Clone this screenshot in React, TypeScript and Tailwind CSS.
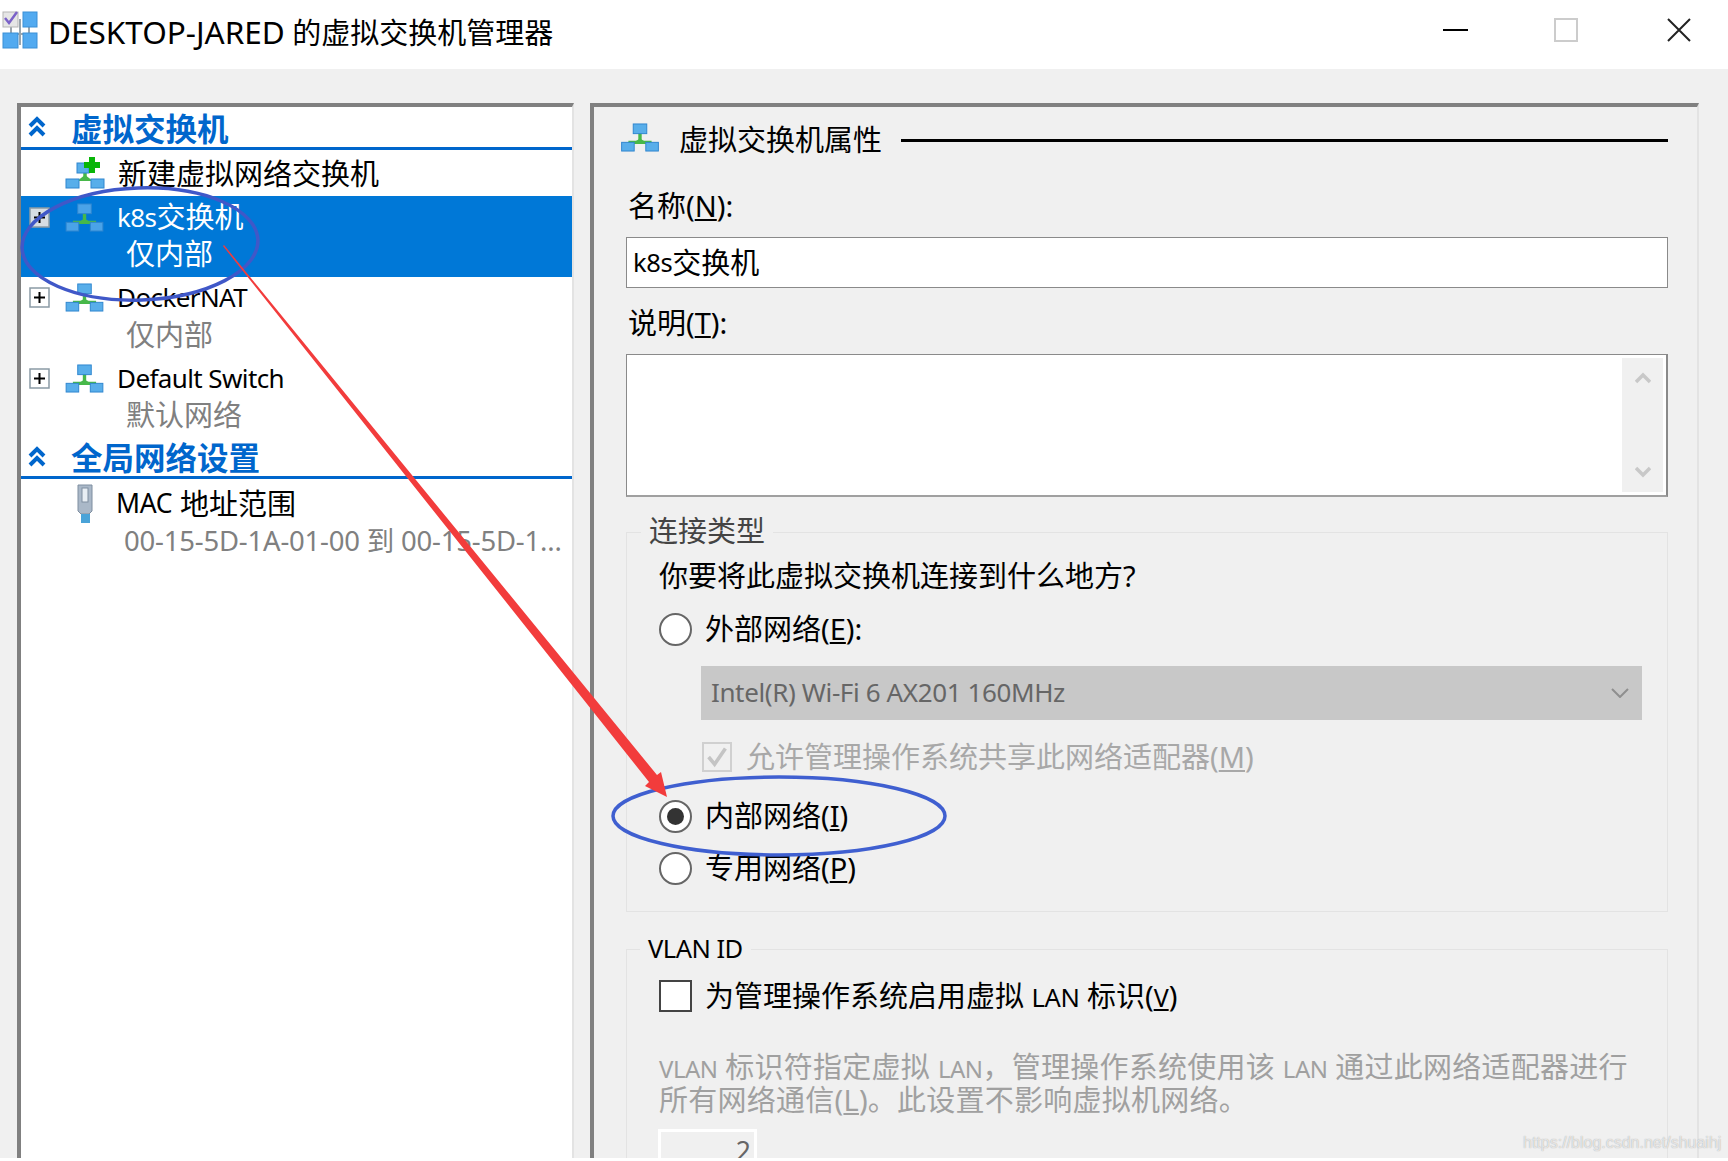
const FONT = "font-['Noto_Sans','Noto_Sans_CJK_SC',sans-serif]"

function SwitchIcon({ className = "", faded = false }: { className?: string; faded?: boolean }) {
  const box = faded ? "#4aa3e8" : "#58aeea"
  return (
    <svg viewBox="0 0 40 30" className={className}>
      <path d="M20 10v8M8 20h24" stroke="#47b84a" strokeWidth="3.5" fill="none" />
      <path d="M12 21l8-5 8 5z" fill="#47b84a" />
      <rect x="13" y="1" width="14" height="10" fill={box} stroke="#2f86cf" />
      <rect x="1" y="20" width="13" height="9" fill={box} stroke="#2f86cf" />
      <rect x="26" y="20" width="13" height="9" fill={box} stroke="#2f86cf" />
    </svg>
  )
}

function NewSwitchIcon({ className = "" }: { className?: string }) {
  return (
    <svg viewBox="0 0 40 32" className={className}>
      <path d="M20 11v10" stroke="#47b84a" strokeWidth="3.5" fill="none" />
      <path d="M12 24l8-6 8 6z" fill="#47b84a" />
      <rect x="12" y="6" width="12" height="10" fill="#58aeea" stroke="#2f86cf" />
      <rect x="1" y="22" width="13" height="9" fill="#58aeea" stroke="#2f86cf" />
      <rect x="26" y="22" width="13" height="9" fill="#58aeea" stroke="#2f86cf" />
      <path d="M24 0h6v5h5v6h-5v5h-6v-5h-5V5h5z" fill="#08b508" />
    </svg>
  )
}

function AppIcon() {
  return (
    <svg viewBox="0 0 36 38" className="w-[36px] h-[38px] shrink-0">
      <path d="M9 15v8h18v-8M18 8v26" stroke="#9aa5ad" strokeWidth="2" fill="none" />
      <rect x="1" y="1" width="15" height="15" fill="#e6e6e6" stroke="#b5b5b5" />
      <path d="M3 7l4 5 8-11" stroke="#7b62c8" strokeWidth="2.5" fill="none" />
      <rect x="21" y="1" width="14" height="15" fill="#52aaf0" stroke="#3b8fd6" />
      <rect x="1" y="22" width="15" height="15" fill="#52aaf0" stroke="#3b8fd6" />
      <rect x="21" y="22" width="14" height="15" fill="#52aaf0" stroke="#3b8fd6" />
    </svg>
  )
}

function CollapseIcon() {
  return (
    <svg viewBox="0 0 18 22" className="w-[18px] h-[22px]">
      <path d="M2 10l7-7 7 7M2 19l7-7 7 7" stroke="#0066cc" strokeWidth="4" fill="none" />
    </svg>
  )
}

function ExpandBox({ selected }: { selected?: boolean }) {
  return (
    <svg viewBox="0 0 21 21" className="w-[21px] h-[21px]">
      <rect x="1" y="1" width="19" height="19" fill={selected ? "#d6dde3" : "#fff"} stroke="#8a9aa5" strokeWidth="1.5" />
      <path d="M5 10.5h11M10.5 5v11" stroke="#000" strokeWidth="2" />
    </svg>
  )
}

function SectionHead({ title, className = "" }: { title: string; className?: string }) {
  return (
    <div className={`flex items-center border-b-[3px] border-[#0066cc] pt-[3px] ${className}`}>
      <div className="w-[50px] pl-[7px] flex items-center -mt-[3px]"><CollapseIcon /></div>
      <span className="text-[31.5px] leading-[38px] font-bold text-[#0066cc]">{title}</span>
    </div>
  )
}

function SwitchRow({ name, cjk, sub, selected }: { name: string; cjk?: string; sub: string; selected?: boolean }) {
  return (
    <div className={`h-[80.5px] flex flex-col pt-[2px] ${selected ? "bg-[#0078d7] text-white" : "text-black"}`}>
      <div className="h-[40px] flex items-center">
        <div className="w-[44px] pl-[8px] flex -mt-[2px]"><ExpandBox selected={selected} /></div>
        <SwitchIcon className="w-[39px] h-[29px] mr-[13px] -mt-[2px]" faded={selected} />
        <span className="text-[26px] tracking-[-0.6px] -mt-[2px]">{name}</span>
        {cjk && <span className="text-[29px] -mt-[2px]">{cjk}</span>}
      </div>
      <div className={`pl-[105px] -mt-[2px] h-[36px] flex items-center text-[29px] ${selected ? "text-white" : "text-[#808080]"}`}>{sub}</div>
    </div>
  )
}

function LeftPanel() {
  return (
    <div className="w-[557px] h-full bg-white border-t-[4px] border-l-[4px] border-t-[#808080] border-l-[#808080] border-r-[2px] border-r-[#e3e3e3] overflow-hidden">
      <SectionHead title="虚拟交换机" className="h-[43px]" />
      <div className="h-[46px] flex items-center pt-[2px]">
        <NewSwitchIcon className="w-[40px] h-[32px] ml-[44px] mr-[13px] -mt-[2px]" />
        <span className="text-[29px]">新建虚拟网络交换机</span>
      </div>
      <SwitchRow name="k8s" cjk="交换机" sub="仅内部" selected />
      <SwitchRow name="DockerNAT" sub="仅内部" />
      <SwitchRow name="Default Switch" sub="默认网络" />
      <SectionHead title="全局网络设置" className="h-[41px]" />
      <div className="h-[48px] flex items-center pt-[2px]">
        <svg viewBox="0 0 20 40" className="w-[20px] h-[40px] ml-[54px] mr-[21px]">
          <path d="M3 1h14v26l-3 3H6l-3-3z" fill="#aab8c8" stroke="#7f8ea0" />
          <rect x="7" y="4" width="6" height="14" fill="#e8eef4" stroke="#7f8ea0" />
          <rect x="6" y="30" width="9" height="9" fill="#4aa3d8" />
        </svg>
        <span className="text-[26.5px] mr-[8px] tracking-[-0.4px]">MAC</span>
        <span className="text-[29px]">地址范围</span>
      </div>
      <div className="pl-[103px] -mt-[4px] h-[36px] flex items-center text-[#808080] whitespace-nowrap">
        <span className="text-[27.5px] tracking-[-0.2px]">00-15-5D-1A-01-00 到 00-15-5D-1...</span>
      </div>
    </div>
  )
}

function Radio({ checked }: { checked?: boolean }) {
  return (
    <span className="w-[33px] h-[33px] rounded-full border-[2px] border-[#666] bg-white flex items-center justify-center shrink-0">
      {checked && <span className="w-[17px] h-[17px] rounded-full bg-[#333]" />}
    </span>
  )
}

function RadioRow({ label, mn, tail, checked, className = "" }: { label: string; mn: string; tail?: string; checked?: boolean; className?: string }) {
  return (
    <div className={`h-[40px] flex items-center gap-[13px] ${className}`}>
      <Radio checked={checked} />
      <span className="text-[29px]">{label}(<u>{mn}</u>){tail}</span>
    </div>
  )
}

function RightPanel() {
  return (
    <div className="w-[1109px] h-full border-t-[4px] border-l-[4px] border-t-[#808080] border-l-[#808080] border-r-[2px] border-r-[#e3e3e3] overflow-hidden">
      <div className="w-[1042px] ml-[32px] text-black">
        <div className="h-[66px] flex items-center">
          <SwitchIcon className="w-[40px] h-[29px] mr-[19px] -ml-[6px] -mt-[5px]" />
          <span className="text-[29px] mr-[19px]">虚拟交换机属性</span>
          <div className="flex-1 h-[3px] bg-black" />
        </div>

        <div className="h-[40px] mt-[13px] flex items-center pl-[2px] text-[29px]">名称(<u>N</u>):</div>
        <div className="h-[51px] mt-[11px] bg-white border border-[#8a8a8a] flex items-center pl-[6px] text-[29px]">
          <span className="text-[25.5px] tracking-[-0.4px]">k8s</span>交换机
        </div>

        <div className="h-[40px] mt-[15px] flex items-center pl-[2px] text-[29px]">说明(<u>T</u>):</div>
        <div className="h-[143px] mt-[11px] bg-white border border-[#8a8a8a] border-r-[2px] border-b-[2px] border-b-[#a0a0a0] relative">
          <div className="absolute right-[3px] top-[3px] bottom-[3px] w-[41px] bg-[#f0f0f0] flex flex-col justify-between items-center py-[14px] text-[#c8c8c8]">
            <svg viewBox="0 0 16 12" className="w-[16px] h-[12px]"><path d="M1 10l7-7 7 7" stroke="currentColor" strokeWidth="3.5" fill="none" /></svg>
            <svg viewBox="0 0 16 12" className="w-[16px] h-[12px]"><path d="M1 2l7 7 7-7" stroke="currentColor" strokeWidth="3.5" fill="none" /></svg>
          </div>
        </div>

        {/* 连接类型 */}
        <div className="relative mt-[35px] h-[380px] border border-[#e3e3e3] pl-[32px] pr-[25px] pt-[23px]">
          <span className="absolute left-[14px] -top-[22px] bg-[#f0f0f0] px-[8px] h-[40px] flex items-center text-[29px] text-[#444]">连接类型</span>
          <div className="h-[40px] flex items-center text-[29px]">你要将此虚拟交换机连接到什么地方?</div>
          <RadioRow label="外部网络" mn="E" tail=":" className="mt-[13px]" />
          <div className="h-[54px] mt-[17px] ml-[42px] bg-[#c8c8c8] flex items-center justify-between pl-[10px] pr-[13px] text-[#666]">
            <span className="text-[26px] tracking-[-0.38px] -mt-[2px]">Intel(R) Wi-Fi 6 AX201 160MHz</span>
            <svg viewBox="0 0 18 10" className="w-[18px] h-[10px]"><path d="M1 1l8 8 8-8" stroke="#8f8f8f" strokeWidth="2" fill="none" /></svg>
          </div>
          <div className="h-[40px] mt-[17px] ml-[43px] flex items-center gap-[14px] text-[#a8a8a8]">
            <span className="w-[30px] h-[30px] border-[2px] border-[#d0d0d0] flex items-center justify-center shrink-0">
              <svg viewBox="0 0 20 20" className="w-[24px] h-[24px]"><path d="M3 10l5 6 9-13" stroke="#c4c4c4" strokeWidth="3" fill="none" /></svg>
            </span>
            <span className="text-[29px]">允许管理操作系统共享此网络适配器(<u>M</u>)</span>
          </div>
          <RadioRow label="内部网络" mn="I" checked className="mt-[19px]" />
          <RadioRow label="专用网络" mn="P" className="mt-[12px]" />
        </div>

        {/* VLAN ID */}
        <div className="relative mt-[37px] h-[260px] border border-[#e3e3e3] pl-[32px] pt-[26px]">
          <span className="absolute left-[13px] -top-[22px] bg-[#f0f0f0] px-[8px] h-[40px] flex items-center text-[25.5px] tracking-[-0.5px]">VLAN ID</span>
          <div className="h-[40px] flex items-center gap-[13px]">
            <span className="w-[33px] h-[32px] bg-white border-[2px] border-[#444] shrink-0" />
            <span className="text-[29px] whitespace-nowrap">为管理操作系统启用虚拟 <span className="text-[25.5px] tracking-[-0.4px]">LAN</span> 标识(<u className="text-[25px]">V</u>)</span>
          </div>
          <div className="mt-[36px] text-[29px] leading-[30.5px] tracking-[0.25px] text-[#a0a0a0] whitespace-nowrap">
            <div><span className="text-[24px] tracking-[-0.5px]">VLAN</span> 标识符指定虚拟 <span className="text-[24px] tracking-[-0.5px]">LAN</span>，管理操作系统使用该 <span className="text-[24px] tracking-[-0.5px]">LAN</span> 通过此网络适配器进行</div>
            <div>所有网络通信(<u>L</u>)。此设置不影响虚拟机网络。</div>
          </div>
          <div className="w-[99px] h-[60px] mt-[14px] -ml-[1px] border-[3px] border-white bg-[#f0f0f0] flex items-start justify-end pr-[3px] pt-[3px] text-[26.5px] leading-[32px] text-[#666]">2</div>
        </div>
      </div>
    </div>
  )
}

export default function App() {
  return (
    <div className={`relative w-[1728px] h-[1161px] overflow-hidden bg-white ${FONT}`}>
      {/* Title bar */}
      <div className="h-[69px] flex items-center pl-[2px] pb-[9px]">
        <AppIcon />
        <span className="ml-[10px] mt-[3px] text-[29px] text-black whitespace-nowrap">
          <span className="text-[31.5px]">DESKTOP-JARED</span> 的虚拟交换机管理器
        </span>
        <div className="ml-auto flex items-center">
          <div className="w-[25px] h-[2px] bg-black mr-[86px]" />
          <div className="w-[24px] h-[24px] border-[2px] border-[#cccccc] mr-[89px]" />
          <svg viewBox="0 0 24 24" className="w-[24px] h-[24px] mr-[37px]"><path d="M1 1l22 22M23 1L1 23" stroke="#222" strokeWidth="2" /></svg>
        </div>
      </div>

      <div className="h-[1089px] bg-[#f0f0f0] pt-[34px] pl-[17px] flex gap-[16px]">
        <LeftPanel />
        <RightPanel />
      </div>

      {/* Annotations drawn over the screenshot */}
      <svg className="absolute inset-0 pointer-events-none" width="1728" height="1161" viewBox="0 0 1728 1161">
        <ellipse cx="140" cy="244" rx="118" ry="56" fill="none" stroke="#4058c8" strokeWidth="3.5" transform="rotate(-2 140 244)" />
        <ellipse cx="779" cy="816" rx="166" ry="39" fill="none" stroke="#3f5fd0" strokeWidth="3.5" />
        <polygon points="224,245 657,775 661,772 667,797 645,786 649,782 223,246" fill="#f23c3c" />
      </svg>

      <span className="absolute left-[1523px] top-[1132px] font-['Liberation_Sans',sans-serif] text-[16px] leading-[22px] text-white/70 [text-shadow:0_0_1px_#999]">https://blog.csdn.net/shuaihj</span>
    </div>
  )
}
